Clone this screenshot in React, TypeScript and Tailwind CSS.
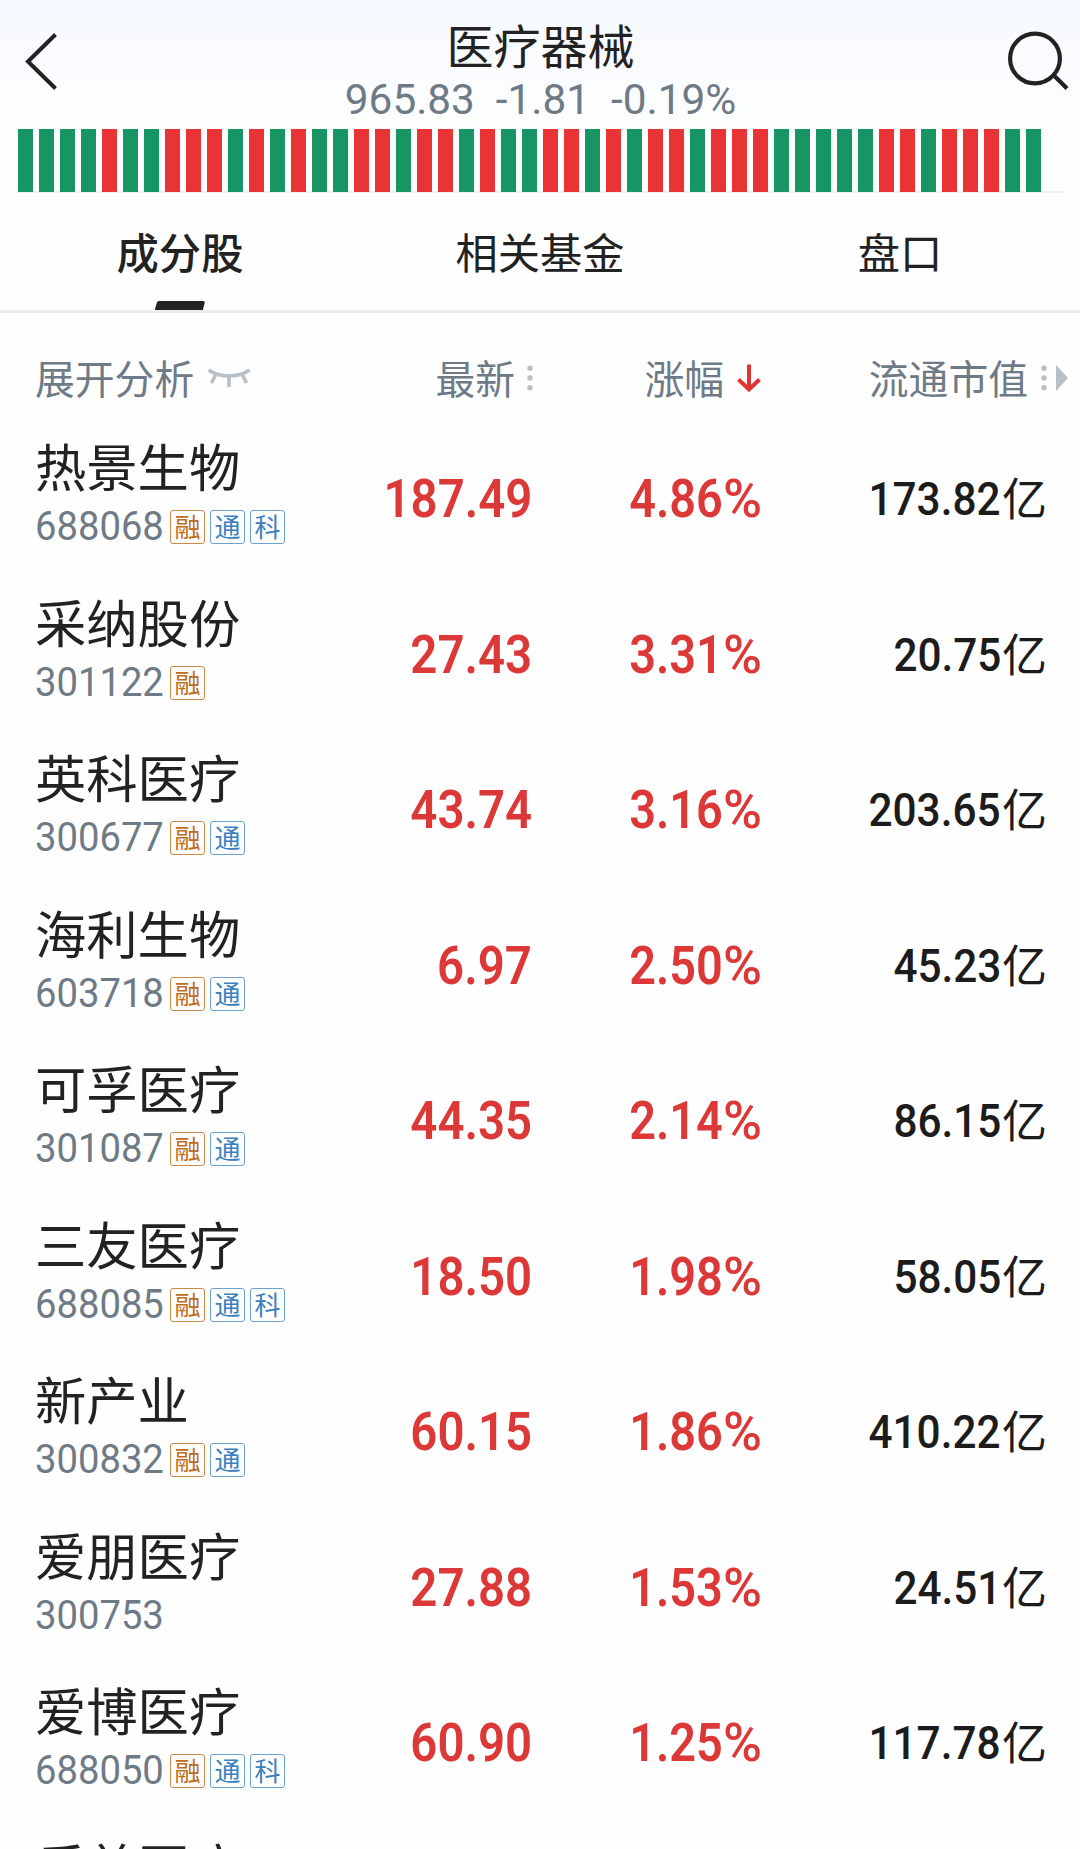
import clsx from "clsx";

type TagName = "融" | "通" | "科";

interface Stock {
  name: string;
  code: string;
  tags: TagName[];
  price: string;
  change: string;
  cap: string;
}

const STOCKS: Stock[] = [
  { name: "热景生物", code: "688068", tags: ["融", "通", "科"], price: "187.49", change: "4.86", cap: "173.82" },
  { name: "采纳股份", code: "301122", tags: ["融"], price: "27.43", change: "3.31", cap: "20.75" },
  { name: "英科医疗", code: "300677", tags: ["融", "通"], price: "43.74", change: "3.16", cap: "203.65" },
  { name: "海利生物", code: "603718", tags: ["融", "通"], price: "6.97", change: "2.50", cap: "45.23" },
  { name: "可孚医疗", code: "301087", tags: ["融", "通"], price: "44.35", change: "2.14", cap: "86.15" },
  { name: "三友医疗", code: "688085", tags: ["融", "通", "科"], price: "18.50", change: "1.98", cap: "58.05" },
  { name: "新产业", code: "300832", tags: ["融", "通"], price: "60.15", change: "1.86", cap: "410.22" },
  { name: "爱朋医疗", code: "300753", tags: [], price: "27.88", change: "1.53", cap: "24.51" },
  { name: "爱博医疗", code: "688050", tags: ["融", "通", "科"], price: "60.90", change: "1.25", cap: "117.78" },
];

// g = down day, r = up day
const BARS = "ggggrggrrrgrgrggrrgrrgrggrrgrgrrgrrrgggggrrgrrrgg".split("");

function Header() {
  return (
    <header className="flex h-[129px] shrink-0 justify-between bg-gradient-to-b from-[#f5f9ff] to-[#fefefe]">
      <button type="button" className="h-[129px] w-[80px]" aria-label="返回">
        <svg width="80" height="129" viewBox="0 0 80 129" fill="none" stroke="#222" strokeWidth="4">
          <path d="M55.500 34.500 L28 61.500 L55.500 88.500" />
        </svg>
      </button>
      <div className="flex flex-col items-center pl-px">
        <h1 className="mt-[20px] text-[47px] leading-[48px] text-[#222]">医疗器械</h1>
        <p className="mt-[6px] flex gap-[21px] font-['Roboto'] text-[42.300px] leading-[52px] text-[#6e7a86]">
          <span>965.83</span>
          <span>-1.81</span>
          <span>-0.19%</span>
        </p>
      </div>
      <button type="button" className="h-[129px] w-[80px]" aria-label="搜索">
        <svg width="80" height="129" viewBox="0 0 80 129" fill="none" stroke="#222" strokeWidth="4.200">
          <circle cx="35" cy="58.500" r="24.900" />
          <path d="M53.500 75 L67 88.500" />
        </svg>
      </button>
    </header>
  );
}

function BarStrip() {
  return (
    <div className="ml-[14px] h-[64px] w-[1051px] shrink-0 border-b-2 border-[#f0f0f1]">
      <div className="flex h-[62.500px] gap-[6px] pl-[4px]">
        {BARS.map((bar, i) => (
          <span
            key={i}
            className={clsx("w-[15px] shrink-0", bar === "g" ? "bg-[#189564]" : "bg-[#e83434]")}
          />
        ))}
      </div>
    </div>
  );
}

function Tabs() {
  return (
    <nav className="grid h-[120px] shrink-0 grid-cols-3 border-b-[3px] border-[#ebecec] text-[42.300px] leading-[60px] text-[#222]">
      <div className="flex flex-col items-center justify-between pt-[28px] font-medium">
        <span>成分股</span>
        <span className="h-[9px] w-[48px] -skew-x-[15deg] rounded-t-[2px] bg-[#222]" />
      </div>
      <div className="pt-[28px] text-center">相关基金</div>
      <div className="pt-[28px] text-center">盘口</div>
    </nav>
  );
}

function Dots() {
  return (
    <svg width="6" height="28" viewBox="0 0 6 28" fill="#b8bfc7">
      <circle cx="3" cy="4.200" r="2.700" />
      <circle cx="3" cy="14" r="2.700" />
      <circle cx="3" cy="23.800" r="2.700" />
    </svg>
  );
}

function ColumnHeads() {
  return (
    <div className="flex h-[108px] shrink-0 items-center pt-[22px] text-[39.800px] leading-[60px] text-[#6e7a86]">
      <div className="flex w-[300px] items-center gap-[13px] pl-[35px]">
        <span className="-mt-[2px]">展开分析</span>
        <svg width="44" height="24" viewBox="0 0 44 24" fill="none" stroke="#b8bfc7" strokeWidth="3.600">
          <path d="M1.500 4 Q10 10 22 10 Q34 10 42.500 4" />
          <path d="M8.500 9 L4.500 17 M22 10 V21 M35.500 9 L39.500 17" />
        </svg>
      </div>
      <div className="flex w-[233px] items-center justify-end gap-[12px]">
        <span className="-mt-[2px]">最新</span>
        <Dots />
      </div>
      <div className="flex w-[229px] items-center justify-end gap-[12px]">
        <span className="-mt-[2px]">涨幅</span>
        <svg width="26" height="30" viewBox="0 0 26 30" fill="none" stroke="#e03434" strokeWidth="4">
          <path d="M13 1.500 V27 M2.500 16.500 L13 26.500 L23.500 16.500" />
        </svg>
      </div>
      <div className="flex w-[306px] items-center justify-end">
        <span className="-mt-[2px]">流通市值</span>
        <span className="ml-[13px] flex">
          <Dots />
        </span>
        <svg className="ml-[9px]" width="12" height="26" viewBox="0 0 12 26" fill="#b8bfc7">
          <path d="M0 0 L12 13 L0 26 Z" />
        </svg>
      </div>
    </div>
  );
}

function Tag({ name }: { name: TagName }) {
  return (
    <span
      className={clsx(
        "flex h-[34px] w-[35px] items-center justify-center rounded-[3px] border pb-[2px] text-[26px] leading-none",
        name === "融" ? "border-[#cc8a48] text-[#bd6d1e]" : "border-[#6ba2d0] text-[#3a80bf]",
      )}
    >
      {name}
    </span>
  );
}

function StockRow({ stock }: { stock: Stock }) {
  return (
    <div className="flex h-[155.500px] shrink-0">
      <div className="w-[300px] pl-[35px]">
        <div className="mt-[14px] h-[60px] text-[51.300px] leading-[60px] text-[#222]">{stock.name}</div>
        <div className="mt-[11px] flex h-[42px] items-center">
          <span className="w-[135px]">
            <span className="inline-block origin-left scale-x-[0.955] font-['Roboto'] text-[40px] leading-[42px] text-[#6e7a86]">
              {stock.code}
            </span>
          </span>
          <span className="flex gap-[5px]">
            {stock.tags.map((tag) => (
              <Tag key={tag} name={tag} />
            ))}
          </span>
        </div>
      </div>
      <div className="flex w-[232px] items-center justify-end pt-[2px]">
        <span className="origin-right scale-x-[0.895] font-['Roboto'] text-[53px] font-semibold text-[#dc3838]">
          {stock.price}
        </span>
      </div>
      <div className="flex w-[230px] items-center justify-end pt-[2px] font-['Roboto'] text-[53px] text-[#dc3838]">
        <span className="origin-right scale-x-[0.885] font-semibold">{stock.change}</span>
        <span className="font-medium">%</span>
      </div>
      <div className="flex w-[285px] items-center justify-end pt-[2px] text-[#1c1c1c]">
        <span className="mr-[1px] origin-right scale-x-[0.92] font-['Roboto'] text-[46px] font-medium">{stock.cap}</span>
        <span className="-mt-[6px] text-[45px]">亿</span>
      </div>
    </div>
  );
}

export default function App() {
  return (
    <main className="flex h-[1849px] w-[1080px] flex-col overflow-hidden bg-[#fefefe] font-['Noto_Sans_CJK_SC',sans-serif]">
      <Header />
      <BarStrip />
      <Tabs />
      <ColumnHeads />
      {STOCKS.map((stock) => (
        <StockRow key={stock.code} stock={stock} />
      ))}
      <div className="shrink-0 pl-[35px] pt-[14px] text-[51.300px] leading-[60px] text-[#222]">乐普医疗</div>
    </main>
  );
}
